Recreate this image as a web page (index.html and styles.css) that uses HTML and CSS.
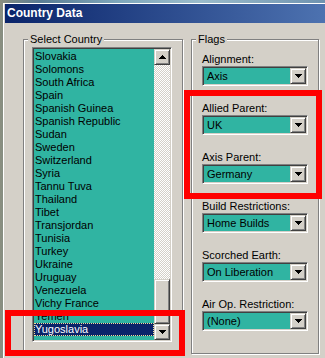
FILE: index.html
```html
<!DOCTYPE html>
<html lang="en">
<head>
  <meta charset="UTF-8">
  <title>Country Data</title>
  <link rel="stylesheet" href="styles.css">
</head>
<body>

  <div class="window">
    <div class="titlebar">Country Data</div>

    <div class="dialog">
      <fieldset class="group group-country">
        <legend>Select Country</legend>
        <div class="group-body">
          <div class="listbox">
            <ul class="items">
              <li>Slovakia</li>
              <li>Solomons</li>
              <li>South Africa</li>
              <li>Spain</li>
              <li>Spanish Guinea</li>
              <li>Spanish Republic</li>
              <li>Sudan</li>
              <li>Sweden</li>
              <li>Switzerland</li>
              <li>Syria</li>
              <li>Tannu Tuva</li>
              <li>Thailand</li>
              <li>Tibet</li>
              <li>Transjordan</li>
              <li>Tunisia</li>
              <li>Turkey</li>
              <li>Ukraine</li>
              <li>Uruguay</li>
              <li>Venezuela</li>
              <li>Vichy France</li>
              <li>Yemen</li>
              <li class="selected">Yugoslavia</li>
            </ul>
            <div class="scrollbar">
              <div class="btn">
                <svg width="7" height="4" viewBox="0 0 7 4"><path d="M3 0h1v1h1v1h1v1h1v1H0V3h1V2h1V1h1z" fill="#000"/></svg>
              </div>
              <div class="track"><div class="btn thumb"></div></div>
              <div class="btn">
                <svg width="7" height="4" viewBox="0 0 7 4"><path d="M0 0h7v1H6v1H5v1H4v1H3V3H2V2H1V1H0z" fill="#000"/></svg>
              </div>
            </div>
          </div>
        </div>
      </fieldset>

      <fieldset class="group group-flags">
        <legend>Flags</legend>
        <div class="group-body">
          <div class="field">
            <label>Alignment:</label>
            <div class="combo"><span class="value">Axis</span><span class="btn"><svg width="7" height="4" viewBox="0 0 7 4"><path d="M0 0h7v1H6v1H5v1H4v1H3V3H2V2H1V1H0z" fill="#000"/></svg></span></div>
          </div>
          <div class="field">
            <label>Allied Parent:</label>
            <div class="combo"><span class="value">UK</span><span class="btn"><svg width="7" height="4" viewBox="0 0 7 4"><path d="M0 0h7v1H6v1H5v1H4v1H3V3H2V2H1V1H0z" fill="#000"/></svg></span></div>
          </div>
          <div class="field">
            <label>Axis Parent:</label>
            <div class="combo"><span class="value">Germany</span><span class="btn"><svg width="7" height="4" viewBox="0 0 7 4"><path d="M0 0h7v1H6v1H5v1H4v1H3V3H2V2H1V1H0z" fill="#000"/></svg></span></div>
          </div>
          <div class="field">
            <label>Build Restrictions:</label>
            <div class="combo"><span class="value">Home Builds</span><span class="btn"><svg width="7" height="4" viewBox="0 0 7 4"><path d="M0 0h7v1H6v1H5v1H4v1H3V3H2V2H1V1H0z" fill="#000"/></svg></span></div>
          </div>
          <div class="field">
            <label>Scorched Earth:</label>
            <div class="combo"><span class="value">On Liberation</span><span class="btn"><svg width="7" height="4" viewBox="0 0 7 4"><path d="M0 0h7v1H6v1H5v1H4v1H3V3H2V2H1V1H0z" fill="#000"/></svg></span></div>
          </div>
          <div class="field">
            <label>Air Op. Restriction:</label>
            <div class="combo"><span class="value">(None)</span><span class="btn"><svg width="7" height="4" viewBox="0 0 7 4"><path d="M0 0h7v1H6v1H5v1H4v1H3V3H2V2H1V1H0z" fill="#000"/></svg></span></div>
          </div>
        </div>
      </fieldset>
    </div>
  </div>

  <!-- red annotation boxes drawn over the dialog -->
  <div class="mark mark-parents"></div>
  <div class="mark mark-selected"></div>

</body>
</html>
```

FILE: styles.css
```css
/* Windows classic dialog colours */
:root {
  --face: #d4d0c8;
  --shadow: #808080;
  --dark: #404040;
  --light: #ffffff;
  --teal: #30b4a2;
  --navy: #0a246a;
  --mark: #ff0000;
}
* {
  box-sizing: border-box;
  margin: 0;
  padding: 0;
}
body {
  width: 325px;
  height: 358px;
  overflow: hidden;
  position: relative;
  background: linear-gradient(90deg, #8a8f80 0, #5b7d95 40px, #7fa8bc 120px, #9bbccb 200px, #6f93b0 325px);
  font-family: "Liberation Sans", Arial, sans-serif;
  font-size: 11px;
  color: #000;
}
.window {
  margin: 3px 0 0 3px;
  width: 322px;
  height: 355px;
  overflow: hidden;
  padding: 1px 0 0 1px;
  background: var(--face);
  box-shadow: inset 1px 1px var(--light);
}
.titlebar {
  height: 19px;
  margin-left: 1px;
  padding-left: 2px;
  line-height: 19px;
  font-size: 12px;
  font-weight: bold;
  color: #fff;
  background: linear-gradient(90deg, var(--navy) 0, #4d72b0 320px);
}
.dialog {
  display: flex;
  gap: 8px;
  padding: 10px 0 0 19px;
}

/* group boxes */
.group {
  border: 1px solid var(--shadow);
  box-shadow: inset 1px 1px var(--light), 1px 1px var(--light);
  height: 321px;
  min-width: 0;
}
.group legend {
  margin-left: 4px;
  padding: 0 2px;
  line-height: 13px;
  background: var(--face);
}
.group-country {
  width: 160px;
}
.group-country .group-body {
  padding: 1px 0 0 8px;
}
.group-flags {
  width: 128px;
}
.group-flags .group-body {
  padding: 7px 0 0 10px;
}

/* list box */
.listbox {
  display: flex;
  width: 140px;
  height: 295px;
  padding: 1px;
  border: 1px solid;
  border-color: var(--shadow) var(--light) var(--light) var(--shadow);
  box-shadow: inset 1px 1px var(--dark), inset -1px -1px var(--face);
  background: var(--teal);
}
.items {
  flex: 1;
  list-style: none;
  padding-top: 1px;
}
.items li {
  height: 13px;
  line-height: 13px;
  padding-left: 1px;
  white-space: nowrap;
}
.items li.selected {
  background: var(--navy);
  color: #fff;
  line-height: 11px;
  padding-left: 0;
  border: 1px dotted #f5db95;
}
.scrollbar {
  width: 16px;
  display: flex;
  flex-direction: column;
}
.btn {
  display: flex;
  align-items: center;
  justify-content: center;
  width: 16px;
  height: 16px;
  background: var(--face);
  border: 1px solid;
  border-color: var(--face) var(--dark) var(--dark) var(--face);
  box-shadow: inset 1px 1px var(--light), inset -1px -1px var(--shadow);
}
.track {
  flex: 1;
  display: flex;
  flex-direction: column;
  justify-content: flex-end;
  background: repeating-conic-gradient(var(--light) 0 25%, var(--face) 0 50%) 0 0 / 2px 2px;
}
.thumb {
  height: 45px;
}

/* combo boxes */
.field {
  margin-bottom: 16px;
}
.field label {
  display: block;
  height: 13px;
  line-height: 13px;
}
.combo {
  display: flex;
  width: 106px;
  height: 20px;
  padding: 1px;
  border: 1px solid;
  border-color: var(--shadow) var(--light) var(--light) var(--shadow);
  box-shadow: inset 1px 1px var(--dark), inset -1px -1px var(--face);
  background: var(--teal);
}
.combo .value {
  flex: 1;
  padding-left: 3px;
  line-height: 16px;
}

/* annotation rectangles */
.mark {
  position: absolute;
  border: 6px solid var(--mark);
}
.mark-parents {
  left: 184px;
  top: 90px;
  width: 138px;
  height: 109px;
}
.mark-selected {
  left: 5px;
  top: 310px;
  width: 180px;
  height: 46px;
}
```
